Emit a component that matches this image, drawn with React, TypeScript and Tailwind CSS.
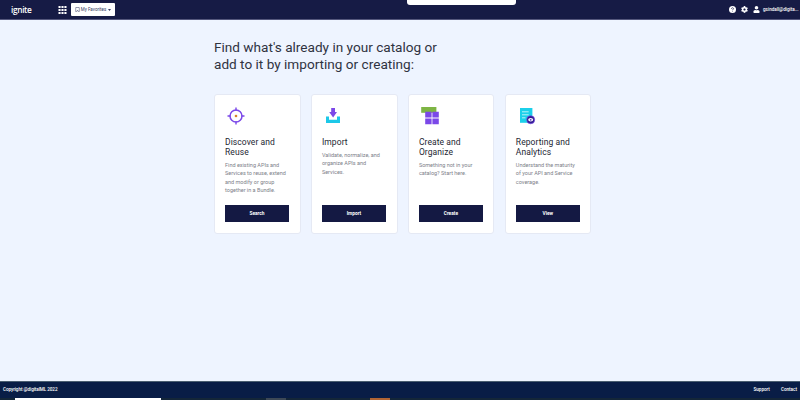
import React from 'react';
import { FaCog, FaRegBookmark, FaUser } from 'react-icons/fa';

interface CatalogCard {
  title: string[];
  body: string[];
  action: string;
  icon: React.ReactNode;
}

const DiscoverIcon = () => (
  <svg width="18" height="18" viewBox="0 0 18 18" fill="none">
    <circle cx="9" cy="9" r="6" stroke="#7b48e8" strokeWidth="1.5" />
    <path d="M9 0.5v3.2M9 14.3v3.2M0.5 9h3.2M14.3 9h3.2" stroke="#7b48e8" strokeWidth="1.4" />
    <circle cx="9" cy="9" r="1.3" fill="#d9822b" />
  </svg>
);

const ImportIcon = () => (
  <svg width="18" height="18" viewBox="0 0 18 18" fill="none">
    <path d="M2 9.4H5V12.8H13V9.4H16V16H2Z" fill="#1cc8e8" />
    <path d="M7.2 1H11V5H13L9.1 10.5L5.2 5H7.2Z" fill="#7b48e8" />
  </svg>
);

const CreateIcon = () => (
  <svg width="20" height="18" viewBox="0 0 20 18" fill="none">
    <path d="M0.2 0H15.4V5.8H0.2Z" fill="#7eb544" />
    <path d="M4.2 4.8H10.6V10.6H4.2ZM11.4 4.8H17.8V10.6H11.4ZM4.2 11.6H10.6V17.3H4.2ZM11.4 11.6H17.8V17.3H11.4Z" fill="#7b48e8" />
  </svg>
);

const ReportIcon = () => (
  <svg width="20" height="18" viewBox="0 0 20 18" fill="none">
    <path d="M2 1H14.4V15.8H2Z" fill="#1cd0ea" />
    <path d="M4 4.8H10.7M4 7.8H10.7M4 10.8H7.5" stroke="#c9f6fb" strokeWidth="0.9" />
    <circle cx="12.7" cy="12.8" r="4" fill="#311b92" stroke="#7b48e8" strokeWidth="0.6" />
    <ellipse cx="12.7" cy="12.8" rx="2.5" ry="1.8" fill="#fff" />
    <circle cx="12.7" cy="12.8" r="0.9" fill="#5a38bd" />
  </svg>
);

const cards: CatalogCard[] = [
  {
    title: ['Discover and', 'Reuse'],
    body: ['Find existing APIs and', 'Services to reuse, extend', 'and modify or group', 'together in a Bundle.'],
    action: 'Search',
    icon: <DiscoverIcon />
  },
  {
    title: ['Import'],
    body: ['Validate, normalize, and', 'organize APIs and', 'Services.'],
    action: 'Import',
    icon: <ImportIcon />
  },
  {
    title: ['Create and', 'Organize'],
    body: ['Something not in your', 'catalog? Start here.'],
    action: 'Create',
    icon: <CreateIcon />
  },
  {
    title: ['Reporting and', 'Analytics'],
    body: ['Understand the maturity', 'of your API and Service', 'coverage.'],
    action: 'View',
    icon: <ReportIcon />
  }
];

function Header() {
  return (
    <header className="relative flex h-5 shrink-0 items-center border-b border-[#55587d] bg-[#161b45] pr-[3px] pl-[11px] text-white">
      <span className="w-[47px] pt-0.5 font-['Open_Sans',sans-serif] text-[8.3px] leading-none font-semibold tracking-[-0.35px]">ignite</span>
      <svg width="9" height="8" viewBox="0 0 8 8" fill="white">
        <path d="M0 0h2.1v2.1H0zM2.95 0h2.1v2.1h-2.1zM5.9 0H8v2.1H5.9zM0 2.95h2.1v2.1H0zM2.95 2.95h2.1v2.1h-2.1zM5.9 2.95H8v2.1H5.9zM0 5.9h2.1V8H0zM2.95 5.9h2.1V8h-2.1zM5.9 5.9H8V8H5.9z" />
      </svg>
      <button className="ml-1 flex h-[13px] w-11 items-center justify-center rounded-[1px] bg-white text-[4.5px] leading-none text-[#343963]">
        <FaRegBookmark size={5} className="mr-px" />
        <span className="pt-px">My Favorites</span>
        <svg className="ml-[2px]" width="3" height="2" viewBox="0 0 3 2" fill="#343963">
          <path d="M0 0H3L1.5 2Z" />
        </svg>
      </button>
      <div className="ml-auto flex items-center">
        <svg width="7" height="7" viewBox="0 0 7 7">
          <circle cx="3.5" cy="3.5" r="3.5" fill="white" />
          <path d="M2.5 2.8C2.5 1.3 4.5 1.4 4.5 2.7C4.5 3.5 3.5 3.3 3.5 4.2M3.5 4.9V5.5" fill="none" stroke="#161b45" strokeWidth="0.7" />
        </svg>
        <FaCog size={7} className="ml-[5px]" />
        <FaUser size={7} className="ml-[5px]" />
        <span className="ml-[3px] w-[34px] pt-px text-[4.6px] leading-none font-medium whitespace-nowrap">gsindall@digita...</span>
      </div>
      <div className="absolute top-0 left-[407px] h-[5px] w-[109px] rounded-b-[3px] bg-white" />
    </header>
  );
}

function Card({ card }: { card: CatalogCard }) {
  return (
    <article className="flex h-[140px] flex-col rounded-[3px] border border-[#e5e9f4] bg-white px-[10px] pt-[12px] pb-[11px]">
      <div className="h-[30px] pl-[2px]">{card.icon}</div>
      <h2 className="text-[8.5px] leading-[10px] tracking-[0.08px] whitespace-nowrap text-[#242733]">
        {card.title.map((line) => (
          <span key={line} className="block">{line}</span>
        ))}
      </h2>
      <p className="mt-[3.7px] text-[5.5px] leading-[8.4px] whitespace-nowrap text-[#7c8089]">
        {card.body.map((line) => (
          <span key={line} className="block">{line}</span>
        ))}
      </p>
      <button className="mt-auto h-[17px] w-16 shrink-0 bg-[#141943] pt-px text-[4.8px] leading-none font-bold text-white">
        {card.action}
      </button>
    </article>
  );
}

function Footer() {
  return (
    <footer className="h-[19px] shrink-0 border-t border-[#4a5e70] bg-[#091d46] text-[4.6px] leading-none font-medium text-white">
      <div className="flex h-[16px] items-center pt-px pr-[3px] pl-[3px]">
        <span className="tracking-[-0.06px]">Copyright @digitalML 2022</span>
        <span className="ml-auto">Support</span>
        <span className="ml-[11px]">Contact</span>
      </div>
      <div className="flex h-[2px] bg-[#142638] pl-[15px]">
        <div className="w-[146px] bg-white" />
        <div className="ml-[105px] w-5 bg-[#3d4855]" />
        <div className="ml-[84px] w-5 bg-[#b16534]" />
      </div>
    </footer>
  );
}

export default function App() {
  return (
    <div className="flex h-[400px] w-[800px] flex-col overflow-hidden bg-[#eef4ff] font-['Roboto',sans-serif]">
      <Header />
      <main className="flex-1 pt-[19px] pl-[214px]">
        <h1 className="text-[13.6px] leading-[16.5px] text-[#30333f]">
          Find what&apos;s already in your catalog or
          <br />
          add to it by importing or creating:
        </h1>
        <div className="mt-[22px] grid w-[377.4px] grid-cols-4 gap-[10.4px]">
          {cards.map((card) => (
            <Card key={card.action} card={card} />
          ))}
        </div>
      </main>
      <Footer />
    </div>
  );
}
